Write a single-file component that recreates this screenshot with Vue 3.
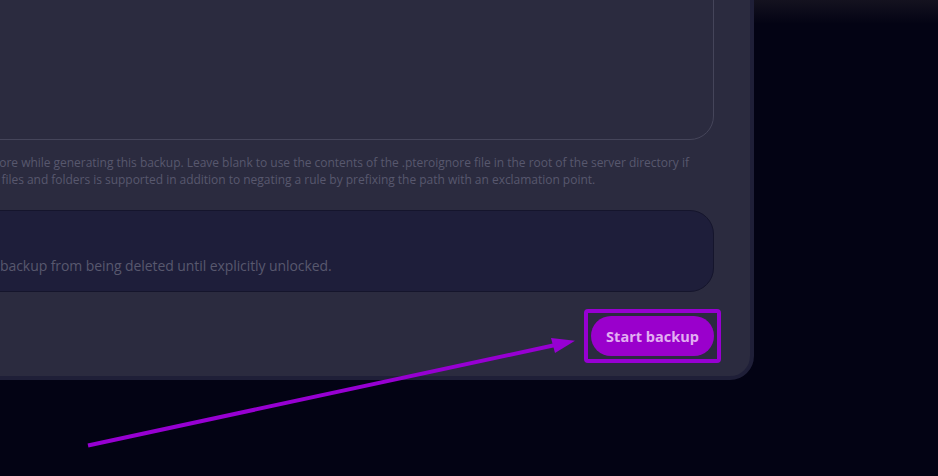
<template>
  <div class="page">
    <div class="top-fade"></div>
    <div class="panel">
      <div class="textarea-box"></div>
      <p class="hint">
        <span>Enter the files or folders to ignore while generating this backup. Leave blank to use the contents of the .pteroignore file in the root of the server directory if</span>
        <span>present. Wildcard matching of files and folders is supported in addition to negating a rule by prefixing the path with an exclamation point.</span>
      </p>
      <div class="lock-card">
        <p class="lock-text">Prevents this backup from being deleted until explicitly unlocked.</p>
      </div>
      <div class="actions">
        <button class="start-btn">Start backup</button>
      </div>
    </div>

    <!-- annotation drawn on top of the screenshot -->
    <div class="highlight"></div>
    <svg class="arrow" width="938" height="476" viewBox="0 0 938 476">
      <line x1="88" y1="445.5" x2="560" y2="344" stroke="#9700d2" stroke-width="4" />
      <polygon points="575,340.7 551,338 555,353" fill="#9700d2" />
    </svg>
  </div>
</template>

<script setup>
</script>

<style>
html,
body {
  margin: 0;
  background: #030314;
}
</style>

<style scoped>
.page {
  position: relative;
  width: 938px;
  height: 476px;
  overflow: hidden;
  background: #030314;
  font-family: "Open Sans", sans-serif;
}
.top-fade {
  position: absolute;
  top: 0;
  left: 0;
  right: 0;
  height: 24px;
  background: linear-gradient(#14121f, #030314);
}
.panel {
  position: relative;
  box-sizing: border-box;
  width: 975px;
  height: 500px;
  margin-left: -221px;
  margin-top: -120px;
  padding: 0 36px 20px 36px;
  background: #2b2b3f;
  border: 4px solid #1f1f38;
  border-radius: 24px;
  display: flex;
  flex-direction: column;
}
.textarea-box {
  flex: none;
  height: 256px;
  box-sizing: border-box;
  border: 1px solid #45455a;
  border-radius: 24px;
}
.hint {
  margin: 14px 0 0 12px;
  font-size: 12px;
  line-height: 17px;
  letter-spacing: -0.025px;
  color: #58586e;
  white-space: nowrap;
}
.hint span {
  display: block;
}
.lock-card {
  flex: none;
  box-sizing: border-box;
  height: 82px;
  margin-top: 22px;
  padding: 45px 16px 0 93px;
  background: #1e1e3a;
  border: 1px solid #15152c;
  border-radius: 24px;
}
.lock-text {
  margin: 0;
  font-size: 14px;
  line-height: 20px;
  letter-spacing: -0.08px;
  color: #58586e;
}
.actions {
  display: flex;
  justify-content: flex-end;
  margin-top: 24px;
}
.start-btn {
  height: 40px;
  width: 123px;
  padding: 0;
  border: none;
  border-radius: 20px;
  background: #9a00cc;
  color: #e2aef2;
  font-family: inherit;
  font-size: 14.5px;
  font-weight: 700;
}
.highlight {
  position: absolute;
  left: 584px;
  top: 309px;
  width: 137px;
  height: 54px;
  box-sizing: border-box;
  border: 4px solid #9700d2;
  border-radius: 4px;
}
.arrow {
  position: absolute;
  left: 0;
  top: 0;
}
</style>
